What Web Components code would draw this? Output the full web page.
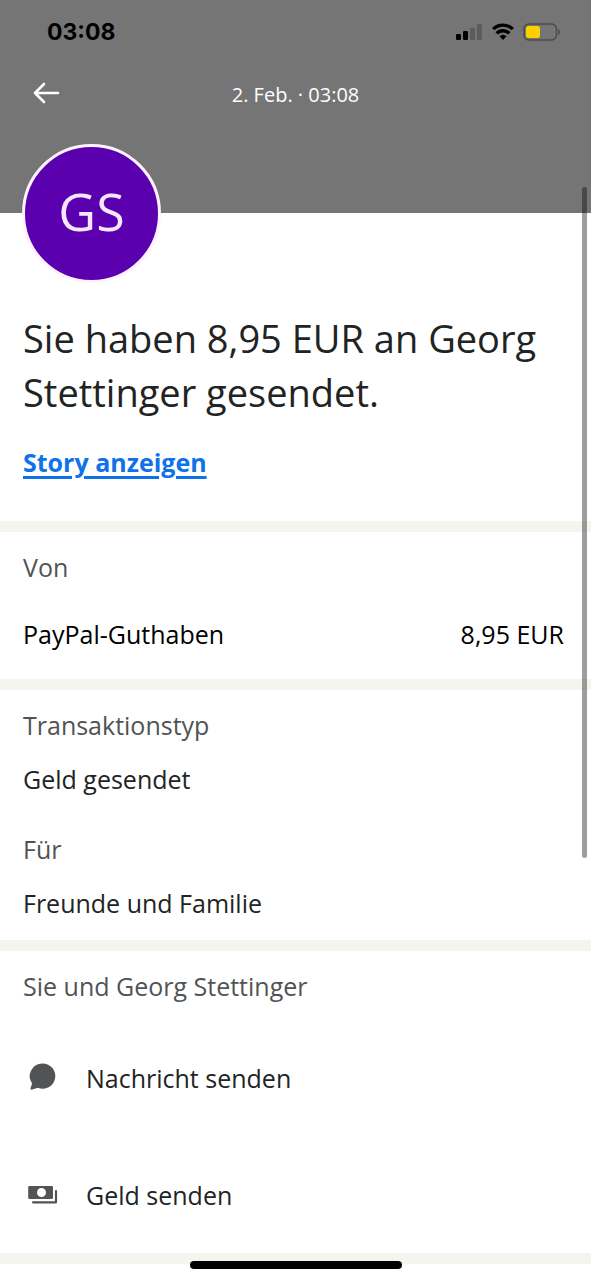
<!DOCTYPE html>
<html lang="de">
<head>
<meta charset="utf-8">
<meta name="viewport" content="width=device-width, initial-scale=1">
<title>Transaktionsdetails</title>
<style>
  html, body { margin: 0; background: #fff; }
  body { font-family: "Open Sans", "Noto Sans", sans-serif; font-size: 25px; line-height: 32px; font-weight: 400; color: #222424; }
</style>
</head>
<body>
<transaction-page></transaction-page>

<script>
const define = (name, html) => customElements.define(name, class extends HTMLElement {
  constructor() {
    super();
    this.attachShadow({ mode: 'open' }).innerHTML = html;
  }
});

define('status-bar', `
  <style>
    :host { display: flex; justify-content: space-between; align-items: center; height: 64px; padding: 0 30px 0 47px; color: #000; box-sizing: border-box; }
    time { font: 700 23px/32px Inter, sans-serif; }
    .icons { display: flex; align-items: center; gap: 9px; }
    svg { display: block; }
  </style>
  <time>03:08</time>
  <div class="icons">
    <svg width="27" height="18" viewBox="0 0 27 18" role="img" aria-label="Mobilfunk">
      <rect x="0" y="11" width="5" height="6" rx="1.3"/><rect x="7" y="8" width="5" height="9" rx="1.3"/>
      <g fill="#5c5c5c"><rect x="14" y="5" width="5" height="12" rx="1.3"/><rect x="21" y="1" width="5" height="16" rx="1.3"/></g>
    </svg>
    <svg width="22" height="18" viewBox="0 0 22 18" role="img" aria-label="WLAN">
      <g fill="none" stroke="#000" stroke-width="3.4"><path d="M1.2 6.1a14 14 0 0 1 19.6 0"/><path d="M4.7 10.4a8.8 8.8 0 0 1 12.6 0"/></g>
      <path d="M7.5 13.3a5.2 5.2 0 0 1 7 0L11 17z"/>
    </svg>
    <svg width="38" height="18" viewBox="0 0 38 18" role="img" aria-label="Akku">
      <rect x="1" y="1" width="32.5" height="16" rx="5" fill="none" stroke="#4b4b4b" stroke-width="1.5"/>
      <rect x="3" y="3" width="14" height="12" rx="2.5" fill="#ffd000"/>
      <path d="M35.4 6v6q1.7-.8 1.7-3t-1.7-3z" fill="#4b4b4b"/>
    </svg>
  </div>`);

define('nav-bar', `
  <style>
    :host { display: grid; grid-template-columns: 1fr auto 1fr; align-items: center; height: 62px; padding: 0 30px; color: #fff; box-sizing: border-box; }
    button { justify-self: start; display: flex; padding: 0 2px 4px; border: 0; background: none; color: inherit; }
    .title { font-size: 20px; }
    svg { display: block; }
  </style>
  <button aria-label="Zurück"><svg width="29" height="24" viewBox="0 0 29 24" fill="none" stroke="currentColor" stroke-width="2.6" stroke-linecap="round" stroke-linejoin="round"><path d="M26 12H3M12 3L3 12l9 9"/></svg></button>
  <span class="title"><slot></slot></span>`);

define('user-avatar', `
  <style>
    :host { display: grid; justify-content: center; align-content: start; box-sizing: border-box; width: 139px; height: 139px; padding-top: 32px; border: 3px solid #fdf3ff; border-radius: 50%; background: #5a00ae; color: #f6e6ff; font-size: 52px; line-height: 64px; }
  </style>
  <span><slot></slot></span>`);

define('page-section', `
  <style>
    :host { display: block; padding: 19px 24px 21px 23px; border-bottom: 11px solid #f5f5f0; }
    h2 { margin: 0; font: inherit; color: #515354; }
  </style>
  <h2><slot name="title"></slot></h2>
  <slot></slot>`);

define('detail-item', `
  <style>
    :host { display: flex; flex-direction: column; gap: 22px; }
    .label { color: #515354; }
  </style>
  <span class="label"><slot name="label"></slot></span>
  <span><slot></slot></span>`);

define('amount-row', `
  <style>
    :host { display: flex; justify-content: space-between; padding: 35px 3px 8px 0; color: #000; }
  </style>
  <span><slot></slot></span>
  <span><slot name="amount"></slot></span>`);

define('action-row', `
  <style>
    :host { display: block; }
    button { display: flex; align-items: center; gap: 23px; width: 100%; height: 117px; padding: 0; border: 0; background: none; font: inherit; color: inherit; text-align: left; }
    .icon { display: flex; width: 40px; height: 36px; color: #515354; }
  </style>
  <button><span class="icon"><slot name="icon"></slot></span><span><slot></slot></span></button>`);

define('scroll-thumb', `
  <style>
    :host { position: fixed; z-index: 3; right: 4px; top: 187px; width: 5px; height: 671px; max-height: 60vh; border-radius: 3px; background: rgba(0,0,0,.38); }
  </style>`);

define('home-indicator', `
  <style>
    :host { position: fixed; z-index: 3; left: 0; right: 0; bottom: 11px; margin: 0 auto; width: 212px; height: 8px; border-radius: 4px; background: #000; }
  </style>`);

define('transaction-page', `
  <style>
    :host { display: block; }
    header { background: #757575; padding-bottom: 87px; }
    .hero { padding: 0 23px 43px; border-bottom: 11px solid #f5f5f0; }
    user-avatar { margin: -69px 0 0 -1px; }
    h1 { margin: 28px 0 27px; font-size: 38px; line-height: 54px; font-weight: 400; }
    a { font-weight: 700; color: #1072eb; text-decoration: underline; text-decoration-thickness: 3px; text-underline-offset: 4px; }
    .stack { display: flex; flex-direction: column; gap: 38px; }
    .actions { padding-top: 17px; margin-bottom: -21px; }
    svg { display: block; }
  </style>
  <header>
    <status-bar></status-bar>
    <nav-bar>2. Feb. · 03:08</nav-bar>
  </header>
  <main>
    <div class="hero">
      <user-avatar>GS</user-avatar>
      <h1>Sie haben 8,95 EUR an Georg Stettinger gesendet.</h1>
      <a href="#story">Story anzeigen</a>
    </div>
    <page-section>
      <span slot="title">Von</span>
      <amount-row>PayPal-Guthaben<span slot="amount">8,95 EUR</span></amount-row>
    </page-section>
    <page-section>
      <div class="stack">
        <detail-item><span slot="label">Transaktionstyp</span>Geld gesendet</detail-item>
        <detail-item><span slot="label">Für</span>Freunde und Familie</detail-item>
      </div>
    </page-section>
    <page-section>
      <span slot="title">Sie und Georg Stettinger</span>
      <div class="actions">
        <action-row>
          <svg slot="icon" width="40" height="36" viewBox="0 0 40 36" fill="currentColor"><path d="M19.7 3.5a12.6 12.6 0 1 1-4.9 24.2l-5.4 1.9c-1.5.4-2.2-.3-1.8-1.6l1.5-4.6A12.6 12.6 0 0 1 19.7 3.5z"/></svg>
          Nachricht senden
        </action-row>
        <action-row>
          <svg slot="icon" width="40" height="36" viewBox="0 0 40 36" fill="currentColor"><path fill-rule="evenodd" d="M6.5 9h22.2q1.3 0 1.3 1.3v10.4q0 1.3-1.3 1.3H6.5q-1.3 0-1.3-1.3V10.3q0-1.3 1.3-1.3zM18.500 11a4.500 4.500 0 1 0 0 9a4.500 4.500 0 1 0 0-9z"/><path d="M10 25.300h23V14" fill="none" stroke="currentColor" stroke-width="2.200" stroke-linejoin="round" stroke-linecap="round"/></svg>
          Geld senden
        </action-row>
      </div>
    </page-section>
  </main>
  <scroll-thumb></scroll-thumb>
  <home-indicator></home-indicator>`);
</script>
</body>
</html>
